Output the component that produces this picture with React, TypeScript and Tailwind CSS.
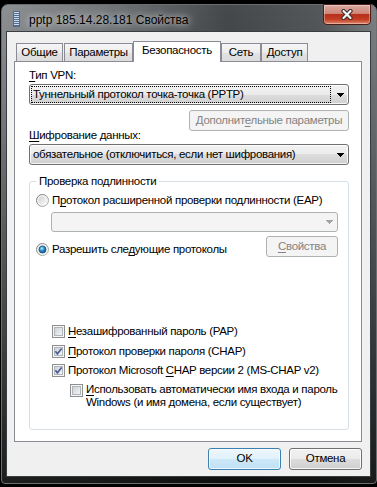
import React from "react";

const FONT = "font-['Liberation_Sans',Arial,sans-serif]";
const UL = "underline decoration-1 underline-offset-[2px]";

const btnNormal =
  "rounded-[3px] border border-[#707070] bg-[linear-gradient(#f2f2f2,#ebebeb_50%,#dddddd_50%,#cfcfcf)] shadow-[inset_0_0_0_1px_rgba(255,255,255,0.8)]";
const btnDisabled = "rounded-[3px] border border-[#adb2b5] bg-[#f4f4f4] text-[#838383]";

const Arrow = ({ color = "#000" }: { color?: string }) => (
  <svg width="7" height="4" viewBox="0 0 7 4" shapeRendering="crispEdges" className="shrink-0">
    <path d="M0 0H7V1H6V2H5V3H4V4H3V3H2V2H1V1H0Z" fill={color} />
  </svg>
);

const CheckBox = ({ checked }: { checked?: boolean }) => (
  <svg width="13" height="13" viewBox="0 0 13 13" className="shrink-0">
    <defs>
      <linearGradient id="cbIn" x1="0" y1="0" x2="1" y2="1">
        <stop offset="0" stopColor="#cbcfd5" />
        <stop offset="1" stopColor="#f7f7f7" />
      </linearGradient>
    </defs>
    <rect x="0.5" y="0.5" width="12" height="12" fill="#f6f6f6" stroke="#8e8f8f" />
    <rect x="2.5" y="2.5" width="8" height="8" fill="url(#cbIn)" stroke="#b0b5bb" />
    {checked && (
      <path d="M3.4 6.3L5.4 8.8L9.6 3.4" fill="none" stroke="#4a5f97" strokeWidth="1.7" />
    )}
  </svg>
);

const Radio = ({ checked }: { checked?: boolean }) => (
  <svg width="13" height="13" viewBox="0 0 13 13" className="shrink-0">
    <defs>
      <linearGradient id="rdOut" x1="0" y1="0" x2="1" y2="1">
        <stop offset="0" stopColor="#6f6f6f" />
        <stop offset="1" stopColor="#bdbdbd" />
      </linearGradient>
      <linearGradient id="rdIn" x1="0" y1="0" x2="1" y2="1">
        <stop offset="0" stopColor="#cdd0d4" />
        <stop offset="1" stopColor="#fafafa" />
      </linearGradient>
      <radialGradient id="rdDot" cx="0.4" cy="0.35" r="0.7">
        <stop offset="0" stopColor="#bfeeff" />
        <stop offset="0.45" stopColor="#2f94d7" />
        <stop offset="1" stopColor="#0d4a7a" />
      </radialGradient>
    </defs>
    <circle cx="6.5" cy="6.5" r="6" fill="#f4f4f4" stroke="url(#rdOut)" />
    <circle cx="6.5" cy="6.5" r="4.2" fill="url(#rdIn)" />
    {checked && <circle cx="6.5" cy="6.5" r="3.5" fill="url(#rdDot)" stroke="#1b4f78" strokeWidth="0.8" />}
  </svg>
);

const TitleIcon = () => (
  <svg width="7" height="16" viewBox="0 0 7 16" shapeRendering="crispEdges" className="mt-[6px] shrink-0">
    <rect x="0" y="0" width="7" height="16" fill="#4f6b8f" />
    {[1, 3, 5, 7, 9, 11, 13].map((y) => (
      <rect key={y} x="1" y={y} width="5" height="1" fill="#cfdced" />
    ))}
  </svg>
);

const Tab = ({ label, w, active }: { label: string; w: number; active?: boolean }) => (
  <div
    style={{ width: w }}
    className={
      active
        ? "relative z-10 -mb-px h-[21px] shrink-0 border-x border-t border-[#898c95] bg-white pt-[1px] text-center leading-[15px]"
        : "h-[18px] shrink-0 border-x border-t border-[#898c95] bg-[linear-gradient(#f6f6f6,#ececec_50%,#e2e2e2_50%,#dcdcdc)] pt-[1px] text-center leading-[15px]"
    }
  >
    {label}
  </div>
);

export default function App() {
  return (
    <div className={`h-[487px] w-[377px] overflow-hidden bg-black pl-[1px] pt-[4px] text-[12px] text-black ${FONT}`}>
      <div className="flex h-[480px] w-[376px] flex-col rounded-t-[7px] rounded-b-[4px] border border-[#6b6e71] bg-[linear-gradient(to_bottom,rgba(0,0,0,0)_0px,rgba(0,0,0,0.05)_40px,rgba(0,0,0,0.8)_100%),linear-gradient(to_right,#8d9093_0%,#76797c_25%,#46494c_60%,#55585b_85%,#7d8083_100%)] pb-[6px] pl-[4px] pr-[5px]">
        {/* title bar */}
        <div className="flex h-[26px] shrink-0 items-start justify-between">
          <div className="flex items-start pl-[7px]">
            <TitleIcon />
            <span className="ml-[9px] mt-[8px] leading-[15px] [text-shadow:0_0_6px_rgba(255,255,255,0.8),0_0_12px_rgba(255,255,255,0.6)]">
              pptp 185.14.28.181 Свойства
            </span>
          </div>
          <div className="-mt-[1px] flex h-[21px] w-[48px] items-center justify-center rounded-b-[4px] border border-[#4a1d17] bg-[linear-gradient(#d9aaa2,#cf8576_45%,#b7301b_50%,#c23b22_75%,#e0886a)] shadow-[inset_0_0_0_1px_rgba(255,255,255,0.35)]">
            <svg width="14" height="11" viewBox="0 0 14 11">
              <path d="M3.5 2L10.5 9M10.5 2L3.5 9" stroke="#3a2a28" strokeWidth="4.2" strokeLinecap="round" />
              <path d="M3.5 2L10.5 9M10.5 2L3.5 9" stroke="#f4f4f4" strokeWidth="2.2" strokeLinecap="round" />
            </svg>
          </div>
        </div>

        {/* client area */}
        <div className="flex h-[446px] shrink-0 flex-col whitespace-nowrap border border-[#3a3d40] bg-[#f0f0f0] text-[11.5px] tracking-[-0.3px]">
          {/* tabs */}
          <div className="flex h-[29px] shrink-0 items-end pl-[9px] pt-[9px]">
            <Tab label="Общие" w={47} />
            <div className="w-px" />
            <Tab label="Параметры" w={69} />
            <Tab label="Безопасность" w={88} active />
            <Tab label="Сеть" w={40} />
            <Tab label="Доступ" w={47} />
          </div>

          {/* tab pane */}
          <div className="ml-[7px] flex h-[381px] w-[348px] shrink-0 flex-col border border-[#898c95] bg-white pl-[14px] pr-[12px]">
            <div className="mt-[6px] leading-[15px]">
              <span className={UL}>Т</span>ип VPN:
            </div>
            <div className={`mt-[1px] flex h-[21px] items-center pl-[1px] pr-[4px] ${btnNormal}`}>
              <div className="h-[17px] w-[300px] border border-dotted border-black pl-[1px] leading-[15px]">
                Туннельный протокол точка-точка (PPTP)
              </div>
              <div className="flex-1" />
              <Arrow />
            </div>
            <div className="mt-[5px] flex justify-end">
              <div className={`flex h-[21px] w-[160px] items-center justify-center ${btnDisabled}`}>
                <span>
                  Дополнит<span className={UL}>е</span>льные параметры
                </span>
              </div>
            </div>
            <div className="-mt-[3px] leading-[15px]">
              <span className={UL}>Ш</span>ифрование данных:
            </div>
            <div className={`mt-[1px] flex h-[21px] items-center pl-[3px] pr-[4px] ${btnNormal}`}>
              <span className="leading-[15px]">обязательное (отключиться, если нет шифрования)</span>
              <div className="flex-1" />
              <Arrow />
            </div>

            {/* group box */}
            <div className="mt-[16px] flex h-[249px] shrink-0 flex-col rounded-[3px] border border-[#d5dfe5]">
              <div className="-mt-[8px] ml-[6px] w-fit bg-white px-[3px] leading-[15px]">Проверка подлинности</div>
              <div className="mt-[4px] flex h-[15px] items-center gap-[3px] pl-[6px] leading-[15px]">
                <Radio />
                <span>
                  П<span className={UL}>р</span>отокол расширенной проверки подлинности (EAP)
                </span>
              </div>
              <div className="ml-[21px] mr-[10px] mt-[4px] flex h-[20px] items-center justify-end rounded-[3px] border border-[#adb2b5] bg-[#f4f4f4] pr-[4px]">
                <Arrow color="#a3a3a3" />
              </div>
              <div className="mt-[4px] flex items-start justify-between pl-[6px] pr-[10px]">
                <div className="mt-[6px] flex h-[15px] items-center gap-[3px] leading-[15px]">
                  <Radio checked />
                  <span>
                    Разрешить сле<span className={UL}>д</span>ующие протоколы
                  </span>
                </div>
                <div className={`flex h-[21px] w-[72px] items-center justify-center ${btnDisabled}`}>
                  <span>
                    <span className={UL}>С</span>войства
                  </span>
                </div>
              </div>

              <div className="mt-[67px] flex h-[15px] items-center gap-[3px] pl-[22px] leading-[15px]">
                <CheckBox />
                <span>
                  <span className={UL}>Н</span>езашифрованный пароль (PAP)
                </span>
              </div>
              <div className="mt-[5px] flex h-[15px] items-center gap-[3px] pl-[22px] leading-[15px]">
                <CheckBox checked />
                <span>
                  <span className={UL}>П</span>ротокол проверки пароля (CHAP)
                </span>
              </div>
              <div className="mt-[4px] flex h-[15px] items-center gap-[3px] pl-[22px] leading-[15px]">
                <CheckBox checked />
                <span>
                  Протокол Microsoft <span className={UL}>C</span>HAP версии 2 (MS-CHAP v2)
                </span>
              </div>
              <div className="mt-[5px] flex items-start gap-[3px] pl-[40px] leading-[13px]">
                <div className="mt-[1px]">
                  <CheckBox />
                </div>
                <span>
                  <span className={UL}>И</span>спользовать автоматически имя входа и пароль
                  <br />
                  Windows (и имя домена, если существует)
                </span>
              </div>
            </div>
          </div>

          {/* dialog buttons */}
          <div className="mt-[6px] flex justify-end gap-[8px] pr-[8px]">
            <div className="flex h-[22px] w-[73px] items-center justify-center rounded-[3px] border border-[#3c7fb1] bg-[linear-gradient(#eef7fd,#e1f1fb_50%,#cde8f8_50%,#bfe0f4)] shadow-[inset_0_0_0_1px_rgba(255,255,255,0.7)]">
              OK
            </div>
            <div className={`flex h-[22px] w-[73px] items-center justify-center ${btnNormal}`}>Отмена</div>
          </div>
        </div>
      </div>
    </div>
  );
}
